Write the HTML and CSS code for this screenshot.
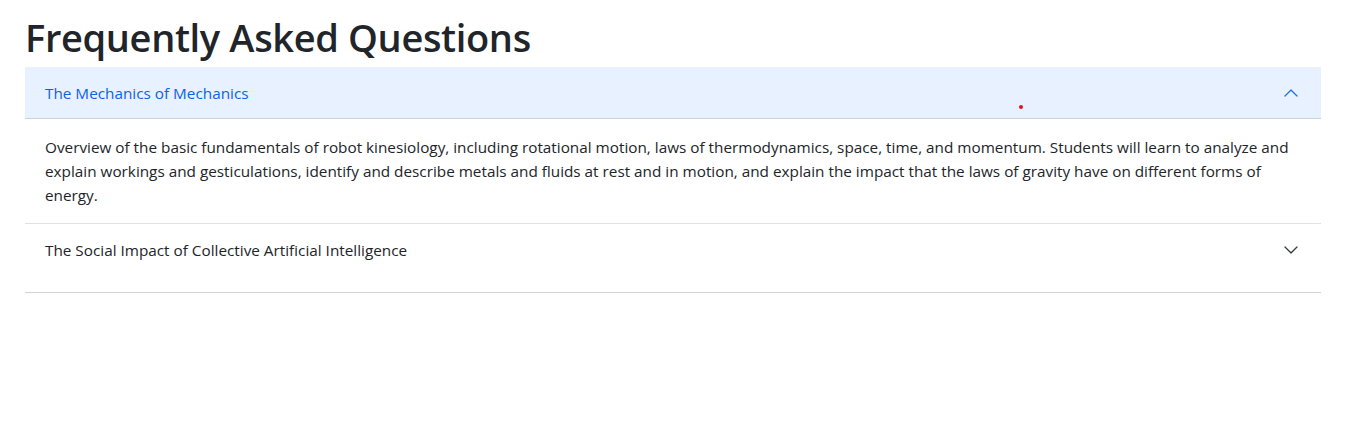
FILE: index.html
```html
<!DOCTYPE html>
<html lang="en">
<head>
<meta charset="utf-8">
<title>FAQ</title>
<link rel="stylesheet" href="styles.css">
</head>
<body>
<main class="page">
  <h1 class="title">Frequently Asked Questions</h1>
  <div class="accordion">
    <div class="item">
      <button class="header active" type="button">
        <span class="label">The Mechanics of Mechanics</span>
        <svg class="chev up" viewBox="0 0 16 16" width="16" height="16"><path fill="currentColor" fill-rule="evenodd" d="M1.646 4.646a.5.5 0 0 1 .708 0L8 10.293l5.646-5.647a.5.5 0 0 1 .708.708l-6 6a.5.5 0 0 1-.708 0l-6-6a.5.5 0 0 1 0-.708z"/></svg>
        <span class="dot"></span>
      </button>
      <div class="body">Overview of the basic fundamentals of robot kinesiology, including rotational motion, laws of thermodynamics, space, time, and momentum. Students will learn to analyze and explain workings and gesticulations, identify and describe metals and fluids at rest and in motion, and explain the impact that the laws of gravity have on different forms of energy.</div>
    </div>
    <div class="item last">
      <button class="header" type="button">
        <span class="label">The Social Impact of Collective Artificial Intelligence</span>
        <svg class="chev" viewBox="0 0 16 16" width="16" height="16"><path fill="currentColor" fill-rule="evenodd" d="M1.646 4.646a.5.5 0 0 1 .708 0L8 10.293l5.646-5.647a.5.5 0 0 1 .708.708l-6 6a.5.5 0 0 1-.708 0l-6-6a.5.5 0 0 1 0-.708z"/></svg>
      </button>
    </div>
  </div>
</main>
</body>
</html>
```
FILE: styles.css
```css
* { box-sizing: border-box; }
html, body { margin: 0; padding: 0; background: #fff; }
body {
  font-family: "Open Sans", "Noto Sans", Arial, sans-serif;
  color: #212529;
  font-size: 15.3px;
  line-height: 24px;
}
.page {
  width: 1296px;
  margin-left: 25px;
}
.title {
  margin: 0;
  padding-top: 13px;
  height: 67px;
  font-size: 38px;
  line-height: 48px;
  font-weight: 600;
  color: #212529;
  letter-spacing: -0.35px;
}
.accordion { display: flex; flex-direction: column; }
.item { border-bottom: 1px solid #dee2e6; position: relative; }
.item.last { border-bottom: 1px solid #d3d3d3; }
.header {
  display: flex;
  align-items: center;
  width: 100%;
  height: 52px;
  padding: 0 20px;
  border: 0;
  background: #fff;
  font: inherit;
  color: #212529;
  text-align: left;
  position: relative;
}
.item.last .header { height: 52px; margin-bottom: 16px; }
.header.active {
  background: #e7f1ff;
  color: #0c63e4;
  box-shadow: inset 0 -1px 0 #c9d3e0;
}
.label { flex: 1; }
.chev { width: 16px; height: 16px; margin-right: 2px; color: #212529; }
.chev path { stroke: currentColor; stroke-width: 0.35; }
.chev.up { transform: rotate(180deg); color: #0c63e4; }
.body {
  padding: 16px 20px;
}
.dot {
  position: absolute;
  left: 994px;
  top: 38px;
  width: 4px;
  height: 4px;
  border-radius: 50%;
  background: #e8101e;
}
```
